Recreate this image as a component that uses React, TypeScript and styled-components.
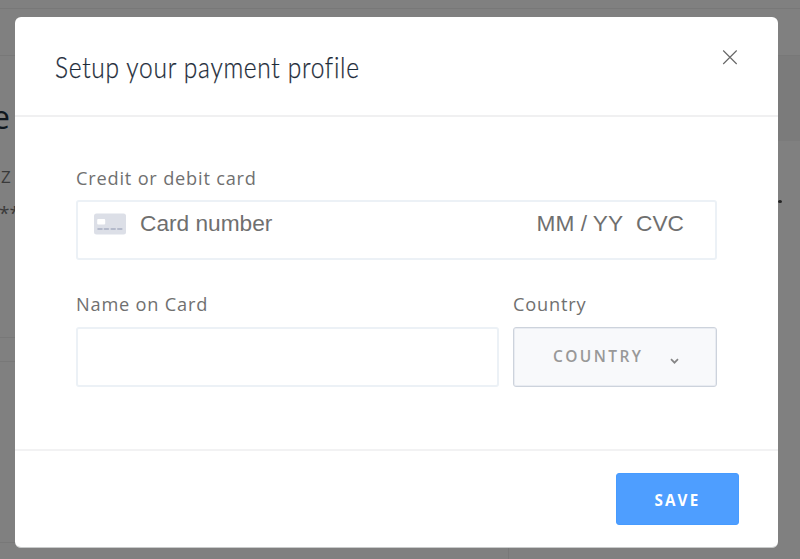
import React from 'react';
import styled, { createGlobalStyle } from 'styled-components';

const GlobalStyle = createGlobalStyle`
  * { box-sizing: border-box; }
  html, body { margin: 0; padding: 0; overflow: hidden; }
  body { background: #808080; font-family: "Open Sans", "Noto Sans", sans-serif; }
`;

const Screen = styled.div`
  position: relative;
  width: 800px;
  height: 559px;
  overflow: hidden;
  background: #808080;
`;

const Page = styled.div`
  display: flex;
  flex-direction: column;
  height: 100%;
`;

const TopStrip = styled.div<{ $height: number }>`
  flex: none;
  height: ${(p) => p.$height}px;
  border-bottom: 1px solid #787878;
`;

const PageBody = styled.div`
  flex: 1;
  display: flex;
  justify-content: space-between;
`;

const MainColumn = styled.div`
  width: 509px;
  display: flex;
  flex-direction: column;
  border-right: 1px solid #787878;
`;

const Profile = styled.div`
  height: 282px;
  border-bottom: 1px solid #787878;
`;

const PageTitle = styled.div`
  width: 10px;
  height: 41px;
  margin-top: 40px;
  display: flex;
  justify-content: flex-end;
  font: 400 32px/41px "Open Sans", sans-serif;
  color: #10171e;
`;

const PageText = styled.div<{ $size: number; $top: number; $left?: number }>`
  margin: ${(p) => p.$top}px 0 0 ${(p) => p.$left ?? 0}px;
  font-size: ${(p) => p.$size}px;
  line-height: 24px;
  color: #3a3a3a;
`;

const Panel = styled.div`
  height: 182px;
  margin-top: 23px;
  border: solid #787878;
  border-width: 1px 0;
`;

const Aside = styled.div`
  width: 22px;
`;

const AsideHead = styled.div`
  height: 85px;
  background: #7b7b7b;
`;

const AsideDot = styled.div`
  width: 4px;
  height: 3px;
  margin-top: 59px;
  border-radius: 50%;
  background: #222;
`;

const Modal = styled.section`
  position: absolute;
  left: 15px;
  top: 17px;
  width: 763.4px;
  height: 531px;
  display: flex;
  flex-direction: column;
  background: #fff;
  border: solid #c9cbcb;
  border-width: 0 0 1px;
  border-radius: 6px;
`;

const Header = styled.header`
  flex: none;
  height: 100px;
  padding: 0 40px;
  display: flex;
  justify-content: space-between;
  align-items: flex-start;
  border-bottom: 2px solid #f0f0f1;
`;

const Title = styled.h1`
  margin: 30px 0 0;
  width: 305px;
  font: 300 29px/40px Lato, sans-serif;
  letter-spacing: 0.8px;
  white-space: nowrap;
  color: #1d2b39;
  -webkit-text-stroke: 0.25px #1d2b39;
  transform: scaleX(0.847);
  transform-origin: 0 50%;
`;

const CloseButton = styled.button`
  width: 16px;
  height: 16px;
  margin: 32px 0 0;
  padding: 0;
  display: block;
  border: 0;
  background: none;
`;

const Form = styled.div`
  flex: 1;
  padding: 46px 60px 0 61px;
`;

const Label = styled.div<{ $height?: number }>`
  height: ${(p) => p.$height ?? 38}px;
  font-size: 18.2px;
  line-height: 30px;
  letter-spacing: 0.8px;
  white-space: nowrap;
  color: #707070;
`;

const CardField = styled.div`
  width: 641px;
  height: 60px;
  padding: 9px 31px 0 16px;
  display: flex;
  align-items: flex-start;
  border: 2px solid #ecf1f6;
  border-radius: 3px;
  font: 400 22.7px/24px "Liberation Sans", Arial, sans-serif;
  color: #6f6f6f;
  white-space: pre;
`;

const CardBadge = styled.svg`
  flex: none;
  margin-top: 2px;
`;

const CardNumber = styled.span`
  flex: 1;
  margin-left: 14px;
`;

const CardCode = styled.span`
  margin-left: 13px;
`;

const Row = styled.div`
  display: flex;
  gap: 14px;
  margin-top: 29px;
`;

const Column = styled.div<{ $width: number }>`
  flex: none;
  width: ${(p) => p.$width}px;
`;

const NameField = styled.input`
  display: block;
  width: 100%;
  height: 60px;
  padding: 0 16px;
  border: 2px solid #ecf1f6;
  border-radius: 3px;
  background: #fff;
  outline: 0;
`;

const CountrySelect = styled.button`
  display: flex;
  width: 100%;
  height: 60px;
  padding: 17px 37px 0 39px;
  align-items: flex-start;
  justify-content: space-between;
  border: 1px solid #cdd3dc;
  box-shadow: inset 0 0 0 1px #e9ecf2;
  border-radius: 3px;
  background: #f8f9fb;
  font: 600 15.5px/22px "Open Sans", sans-serif;
  letter-spacing: 2.4px;
  color: #989898;
`;

const Chevron = styled.svg`
  margin-top: 13px;
`;

const Footer = styled.footer`
  flex: none;
  height: 98px;
  padding: 22px 39.5px 0 0;
  display: flex;
  justify-content: flex-end;
  border-top: 2px solid #f2f2f3;
`;

const SaveButton = styled.button`
  width: 123px;
  height: 52px;
  padding: 2px 0 0;
  border: 1px solid #479bff;
  border-radius: 3px;
  background: #4e9eff;
  color: #fff;
  font: 700 15.2px/22px "Open Sans", sans-serif;
  letter-spacing: 2.2px;
`;

function CardIcon() {
  return (
    <CardBadge width="32" height="22" viewBox="0 0 32 22">
      <rect y="0.5" width="32" height="21" rx="2.5" fill="#dcdfe7" />
      <rect x="3.2" y="6" width="8" height="5.5" rx="1" fill="#fff" />
      <path d="M4.2 16h3.6M10.6 16h3.6M17.4 16H21M24 16h3.6" stroke="#b4bacb" strokeWidth="2" strokeLinecap="round" />
    </CardBadge>
  );
}

export default function App() {
  return (
    <Screen>
      <GlobalStyle />
      <Page>
        <TopStrip $height={9} />
        <TopStrip $height={47} />
        <PageBody>
          <MainColumn>
            <Profile>
              <PageTitle>e</PageTitle>
              <PageText $size={17} $top={28} $left={1}>Z</PageText>
              <PageText $size={19} $top={12} $left={-1}>**</PageText>
            </Profile>
            <Panel />
          </MainColumn>
          <Aside>
            <AsideHead />
            <AsideDot />
          </Aside>
        </PageBody>
      </Page>
      <Modal>
        <Header>
          <Title>Setup your payment profile</Title>
          <CloseButton aria-label="Close">
            <svg width="16" height="16" viewBox="0 0 16 16">
              <path d="M1.2 1.5 14.7 15M14.7 1.5 1.2 15" stroke="#666" strokeWidth="1.1" />
            </svg>
          </CloseButton>
        </Header>
        <Form>
          <Label $height={37}>Credit or debit card</Label>
          <CardField>
            <CardIcon />
            <CardNumber>Card number</CardNumber>
            <span>MM / YY</span>
            <CardCode>CVC</CardCode>
          </CardField>
          <Row>
            <Column $width={423}>
              <Label>Name on Card</Label>
              <NameField aria-label="Name on Card" />
            </Column>
            <Column $width={204.4}>
              <Label>Country</Label>
              <CountrySelect>
                COUNTRY
                <Chevron width="9" height="7" viewBox="0 0 9 7" fill="none">
                  <path d="M1 1.2 4.5 4.7 8 1.2" stroke="#858585" strokeWidth="1.7" />
                </Chevron>
              </CountrySelect>
            </Column>
          </Row>
        </Form>
        <Footer>
          <SaveButton>SAVE</SaveButton>
        </Footer>
      </Modal>
    </Screen>
  );
}
